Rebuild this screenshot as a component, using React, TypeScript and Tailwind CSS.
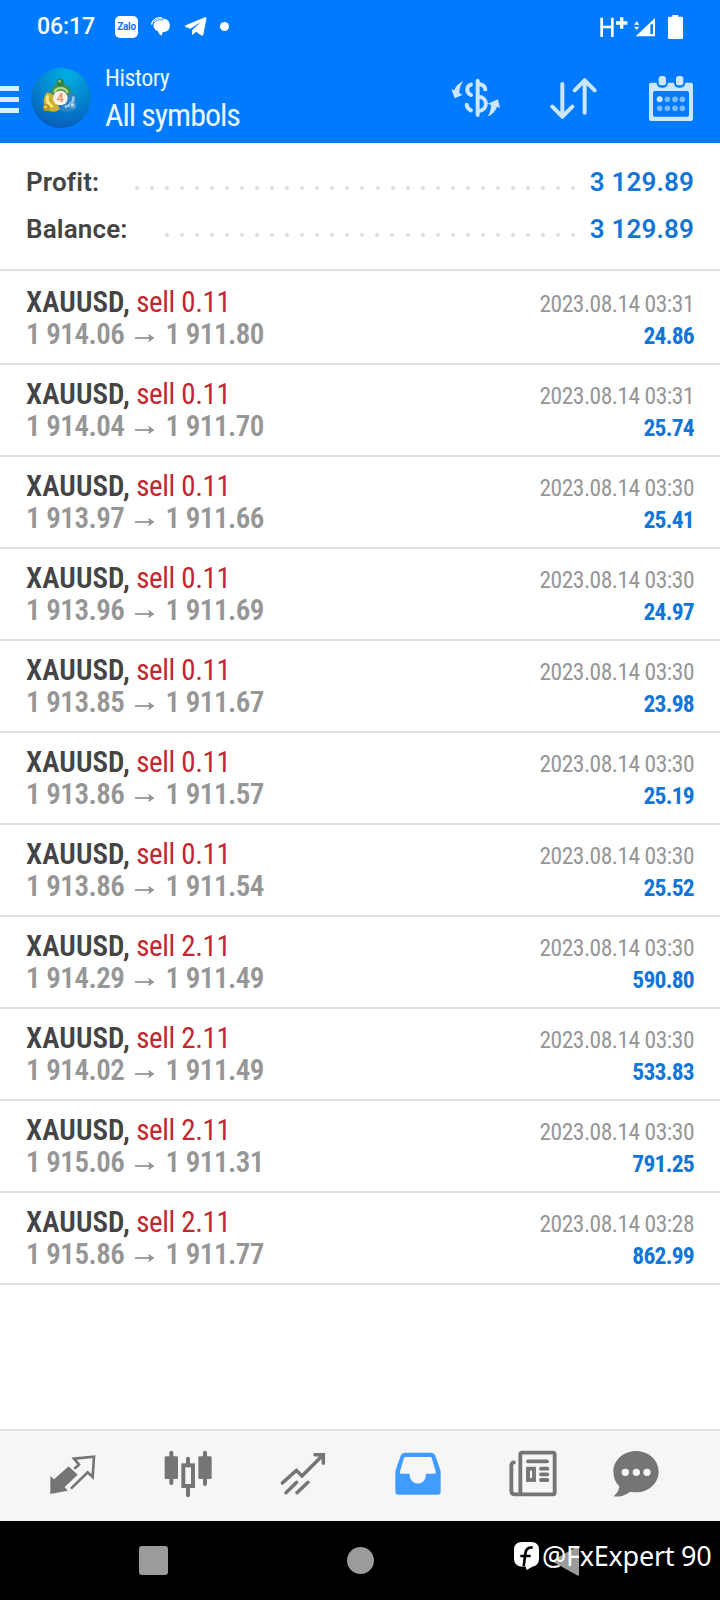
import type { ReactNode } from 'react'
import { clsx } from 'clsx'

interface Deal {
  volume: string
  open: string
  close: string
  time: string
  profit: string
}

const deals: Deal[] = [
  { volume: '0.11', open: '1 914.06', close: '1 911.80', time: '03:31', profit: '24.86' },
  { volume: '0.11', open: '1 914.04', close: '1 911.70', time: '03:31', profit: '25.74' },
  { volume: '0.11', open: '1 913.97', close: '1 911.66', time: '03:30', profit: '25.41' },
  { volume: '0.11', open: '1 913.96', close: '1 911.69', time: '03:30', profit: '24.97' },
  { volume: '0.11', open: '1 913.85', close: '1 911.67', time: '03:30', profit: '23.98' },
  { volume: '0.11', open: '1 913.86', close: '1 911.57', time: '03:30', profit: '25.19' },
  { volume: '0.11', open: '1 913.86', close: '1 911.54', time: '03:30', profit: '25.52' },
  { volume: '2.11', open: '1 914.29', close: '1 911.49', time: '03:30', profit: '590.80' },
  { volume: '2.11', open: '1 914.02', close: '1 911.49', time: '03:30', profit: '533.83' },
  { volume: '2.11', open: '1 915.06', close: '1 911.31', time: '03:30', profit: '791.25' },
  { volume: '2.11', open: '1 915.86', close: '1 911.77', time: '03:28', profit: '862.99' },
]

function StatusBar() {
  return (
    <div className="flex h-[53px] items-center pl-[37px] pr-[37px] text-white">
      <span className="w-[78px] text-[23px] font-medium leading-none tracking-[-0.1px]">06:17</span>
      <span className="flex h-[22px] w-[23px] items-center justify-center rounded-[5px] bg-white text-[10px] font-bold leading-none tracking-tight text-[#1673e6]">
        Zalo
      </span>
      <svg className="ml-[13px] h-[19px] w-5" viewBox="0 0 60 57" fill="#fff">
        <path d="M9 12C19 1 44 2 52 12c8 11 5 25-5 31-4 2-8 3-12 3l-4 10c-5-3-9-8-10-13C11 39 6 30 8 20z" />
        <path d="M2 21C5 7 18 1 31 2" fill="none" stroke="#fff" strokeWidth="4" strokeLinecap="round" />
        <path d="M8 19C15 9 25 7 38 9" fill="none" stroke="#007aff" strokeWidth="2.500" />
      </svg>
      <svg className="ml-[14px] h-[19px] w-[22px]" viewBox="0 0 66 57" fill="#fff">
        <path d="M2 25 60 1c3-1 5 0 4 4l-9 48c-1 4-4 4-7 2L33 44l-8 8c-2 2-4 1-4-2l1-12 27-24-33 21-14-5c-3-1-3-4 0-5z" />
      </svg>
      <span className="ml-[13px] size-[9px] rounded-full bg-white" />
      <svg className="ml-auto h-6 w-[84px]" viewBox="0 0 252 72" fill="#fff">
        <path d="M8 8v58M40 8v58M8 36h32" fill="none" stroke="#fff" strokeWidth="8" />
        <path d="M51 24h34M68 7v34" fill="none" stroke="#fff" strokeWidth="10" />
        <path d="m113 19 8 10h-16zM113 45l8-10h-16z" />
        <path d="M110 64 168 9v55z" />
        <path d="M154 28h8v29h-8z" fill="#007aff" />
        <path d="M220 0h18v5h10q4 0 4 4v59q0 4-4 4h-37q-4 0-4-4V9q0-4 4-4h9z" />
      </svg>
    </div>
  )
}

function AppLogo() {
  return (
    <svg className="ml-3 size-[60px]" viewBox="0 0 180 180">
      <defs>
        <radialGradient id="logoBg" cx="0.6" cy="0.12" r="0.95">
          <stop offset="0" stopColor="#00afe2" />
          <stop offset="0.5" stopColor="#0285cf" />
          <stop offset="1" stopColor="#0959b8" />
        </radialGradient>
      </defs>
      <circle cx="90" cy="90" r="90" fill="url(#logoBg)" />
      {/* Three figures around the coin */}
      <path d="M60 78c0-20 12-32 29-32s31 12 31 34l-11 16H68z" fill="#3f9150" />
      <path d="M70 73c5-17 34-17 40 1" fill="none" stroke="#b8d68b" strokeWidth="7" />
      <circle cx="88" cy="43" r="11" fill="#2e8340" />
      <circle cx="86" cy="40" r="4" fill="#8fca7c" />
      <path d="M49 72c-9 10-13 24-10 36 2 16 13 23 27 23 9 0 16-3 21-8L64 78z" fill="#cfae38" />
      <path d="M50 82c-4 14 0 27 15 34" fill="none" stroke="#f8e976" strokeWidth="9" />
      <circle cx="46" cy="119" r="10" fill="#b8901c" />
      <circle cx="44" cy="117" r="4" fill="#f2dc72" />
      <path d="M127 74c9 10 12 24 9 36-3 14-13 21-26 21-10 0-18-3-23-8l25-43z" fill="#2f83c8" />
      <path d="M127 85c2 18-9 28-26 32" fill="none" stroke="#91cbf1" strokeWidth="8" />
      <circle cx="126" cy="114" r="10" fill="#4a9ad8" />
      <circle cx="124" cy="111" r="5" fill="#c3e5f6" />
      <circle cx="88" cy="90" r="22" fill="#f9f5ed" />
      <text x="88" y="103" textAnchor="middle" fontSize="37" fontWeight="700" fill="#ef9468">
        4
      </text>
    </svg>
  )
}

function Header() {
  return (
    <header className="h-[143px] bg-[#007aff]">
      <StatusBar />
      <div className="flex h-[90px] items-center pr-[27px]">
        <div className="mt-[3px] flex w-[19px] flex-col gap-[6px]">
          <span className="h-[5px] bg-[#d9efff]" />
          <span className="h-[5px] bg-[#d9efff]" />
          <span className="h-[5px] bg-[#d9efff]" />
        </div>
        <AppLogo />
        <div className="ml-[14px] flex flex-col whitespace-nowrap text-[#e9f7ff] [font-stretch:75%]">
          <span className="text-2xl leading-[34px] tracking-[-0.5px]">History</span>
          <span className="text-[32px] leading-10 tracking-[-1.05px]">All symbols</span>
        </div>
        <div className="ml-auto flex items-center text-[#cce6ff]">
          <svg className="h-10 w-[50px]" viewBox="0 0 150 120" fill="none" stroke="currentColor">
            <g strokeWidth="12" strokeLinecap="round">
              <path d="M80 8v103" />
              <path d="M60 20C45 25 45 43 60 51" />
              <path d="M84 19c10 0 17 6 19 15" />
              <path d="M84 56c28 3 27 40 0 43" />
              <path d="M47 80c1 8 6 14 13 17" />
            </g>
            <path d="M37 10C25 14 14 25 10 37L1 34l10 27 24-11-10-5c0-13 4-25 12-35z" fill="currentColor" stroke="none" />
            <path d="M110 115c12-4 24-16 28-29l9 4-6-26-31 13 10 4c0 13-3 24-10 34z" fill="currentColor" stroke="none" />
          </svg>
          <svg className="ml-[49px] h-[41px] w-[47px]" viewBox="0 0 141 123" fill="none" stroke="currentColor" strokeWidth="12" strokeLinecap="round">
            <path d="M37 18v97M7 86l30 30 30-30M104 104V7M74 37l30-30 30 30" />
          </svg>
          <svg className="ml-[52px] h-[45px] w-11" viewBox="0 0 132 135" fill="currentColor">
            <path
              fillRule="evenodd"
              d="M6 20h17c0 10 6 15 17 15s16-5 17-15h18c0 10 6 15 17 15s16-5 17-15h17q6 0 6 6v103q0 6-6 6H6q-6 0-6-6V26q0-6 6-6zm12 25q-6 0-6 6v65q0 6 6 6h96q6 0 6-6V51q0-6-6-6z"
            />
            <rect x="29" y="0" width="22" height="28" rx="8" />
            <rect x="81" y="0" width="22" height="28" rx="8" />
            <circle cx="32" cy="70" r="9" />
            <g opacity="0.6">
              <circle cx="55" cy="70" r="8.500" />
              <circle cx="78" cy="70" r="8.500" />
              <circle cx="100" cy="70" r="8.500" />
              <circle cx="32" cy="97" r="8.500" />
              <circle cx="55" cy="97" r="8.500" />
              <circle cx="78" cy="97" r="8.500" />
              <circle cx="100" cy="97" r="8.500" />
            </g>
          </svg>
        </div>
      </div>
    </header>
  )
}

function SummaryLine({ label, value, dots, dotsClass }: { label: string; value: string; dots: number; dotsClass: string }) {
  return (
    <div className="flex h-[47px] items-center text-[26px]">
      <span className="font-semibold tracking-[0.15px] text-[#444]">{label}</span>
      <div className={clsx('ml-auto mt-[11px] flex justify-between', dotsClass)}>
        {Array.from({ length: dots }, (_, i) => (
          <span key={i} className="size-1 rounded-full bg-[#dedede]" />
        ))}
      </div>
      <span className="w-[119px] whitespace-nowrap text-right font-semibold tracking-[0.15px] text-[#1276d8]">
        {value}
      </span>
    </div>
  )
}

function DealRow({ deal, first }: { deal: Deal; first: boolean }) {
  return (
    <div
      className={clsx(
        'flex justify-between whitespace-nowrap border-b-2 border-[#e1e1e1] px-[26px] [font-stretch:75%]',
        first ? 'h-[94px] pt-[15px]' : 'h-[92px] pt-[13px]'
      )}
    >
      <div className="flex flex-col text-[29px] leading-8">
        <div className="tracking-[-0.35px] text-[#c1272d]">
          <span className="font-semibold tracking-[0.1px] text-[#444]">XAUUSD,</span> sell {deal.volume}
        </div>
        <div className="flex items-center font-semibold tracking-[-0.5px] text-[#969696]">
          {deal.open}
          <svg className="ml-[11px] mr-[10px] mt-2 h-3 w-5" viewBox="0 0 20 12" fill="none" stroke="currentColor" strokeWidth="1.8">
            <path d="M0 6h17" />
            <path d="m13 1.5 6.5 4.5-6.5 4.5 1.5-4.5z" fill="currentColor" stroke="none" />
          </svg>
          {deal.close}
        </div>
      </div>
      <div className="flex flex-col pt-[2px] text-right text-[23.5px] leading-8">
        <span className="tracking-[-0.5px] text-[#969696]">2023.08.14 {deal.time}</span>
        <span className="font-bold tracking-[-0.75px] text-[#1276d8]">{deal.profit}</span>
      </div>
    </div>
  )
}

function NavIcon({ children, className }: { children: ReactNode; className?: string }) {
  return (
    <svg className={clsx('size-12 shrink-0', className)} viewBox="0 0 144 144" fill="currentColor">
      {children}
    </svg>
  )
}

function BottomNav() {
  return (
    <nav className="flex h-[92px] gap-[67px] border-t-2 border-[#e1e1e1] bg-[#f6f6f6] pl-[49px] pt-[19px] text-[#757575]">
      {/* Quotes */}
      <NavIcon>
        <path d="m4 78 11 10 44-39 27 25-39 37 9 11-52 10z" />
        <path d="m76 56 14-12-15-18 60-6-4 61-15-14-50 49" fill="none" stroke="currentColor" strokeWidth="8" />
      </NavIcon>
      {/* Charts */}
      <NavIcon>
        <rect x="2" y="19" width="40" height="68" rx="4" />
        <rect x="103" y="19" width="40" height="68" rx="4" />
        <path d="M22 8v91M123 8v94M72 26v20M72 110v26" stroke="currentColor" strokeWidth="12" strokeLinecap="round" />
        <rect x="58" y="46" width="29" height="62" fill="none" stroke="currentColor" strokeWidth="12" />
      </NavIcon>
      {/* Trade */}
      <NavIcon>
        <g fill="none" stroke="currentColor" strokeWidth="10.500" strokeLinecap="round">
          <path d="m10 99 42-38 17 17 63-63M108 14h25v26M21 128l32-31M54 128l33-31" />
        </g>
      </NavIcon>
      {/* History */}
      <NavIcon className="text-[#409cff]">
        <path
          fillRule="evenodd"
          d="M34 8h76q10 0 14 9l13 37q3 8 3 16v55q0 9-9 9H13q-9 0-9-9V70q0-8 3-16l13-37q4-9 14-9zm0 13q-4 0-5 5L18 65q-2 6 4 6h25c-1 39 50 39 49 0h25q6 0 4-6l-11-39q-1-5-5-5z"
        />
      </NavIcon>
      {/* News */}
      <NavIcon>
        <g fill="none" stroke="currentColor" strokeWidth="11.500" strokeLinecap="round">
          <rect x="34" y="8" width="103" height="125" rx="5" />
          <path d="M15 37q-8 0-8 11v75q0 10 11 10h17M57 34h57M96 56h19M96 73h19M96 90h19" />
          <rect x="57" y="56" width="18" height="34" />
        </g>
      </NavIcon>
      {/* Messages */}
      <NavIcon className="-ml-3">
        <path
          fillRule="evenodd"
          d="M72 3c38 0 68 28 68 62s-30 62-68 62q-9 0-17-2c-18 12-34 17-50 14 10-9 16-18 17-30C10 97 4 82 4 65 4 31 34 3 72 3zM40 56a11 11 0 1 0 0 22 11 11 0 0 0 0-22zm33 0a11 11 0 1 0 0 22 11 11 0 0 0 0-22zm32 0a11 11 0 1 0 0 22 11 11 0 0 0 0-22z"
        />
      </NavIcon>
    </nav>
  )
}

function SystemBar() {
  return (
    <div className="relative flex h-[79px] items-center bg-black pl-[139px]">
      <span className="size-[29px] rounded-[3px] bg-[#9b9b9b]" />
      <span className="ml-[179px] size-[27px] rounded-full bg-[#9b9b9b]" />
      <svg className="ml-[177px] h-[30px] w-7" viewBox="0 0 28 30" fill="#9b9b9b">
        <path d="M28 1.5v27q0 1.500-1.500 1L3 16.500q-2-1.500 0-3L26.500.5q1.500-.5 1.500 1z" />
      </svg>
      {/* Author tag drawn over the system buttons */}
      <div className="absolute left-[514px] top-[18px] flex items-center whitespace-nowrap text-white">
        <svg className="h-7 w-[25px]" viewBox="0 0 75 84">
          <path d="M24 0h27q24 0 24 24v26q0 20-20 24L38 84l-3-10H24Q0 72 0 50V24Q0 0 24 0z" fill="#fff" />
          <path d="M56 17q-19-3-22 17l-5 39M19 42h31" fill="none" stroke="#000" strokeWidth="8" />
        </svg>
        <span className="ml-[3px] font-['Noto_Sans',sans-serif] text-[27px] leading-[34px] tracking-[-0.25px]">@FxExpert 90</span>
      </div>
    </div>
  )
}

export default function App() {
  return (
    <div className="flex h-[1600px] w-[720px] flex-col overflow-hidden bg-white font-[Roboto,sans-serif]">
      <Header />
      <section className="h-32 border-b-2 border-[#e1e1e1] px-[26px] pt-4">
        <SummaryLine label="Profit:" value="3 129.89" dots={30} dotsClass="w-[440px]" />
        <SummaryLine label="Balance:" value="3 129.89" dots={28} dotsClass="w-[410px]" />
      </section>
      <main className="flex-1">
        {deals.map((deal, i) => (
          <DealRow key={i} deal={deal} first={i === 0} />
        ))}
      </main>
      <BottomNav />
      <SystemBar />
    </div>
  )
}
